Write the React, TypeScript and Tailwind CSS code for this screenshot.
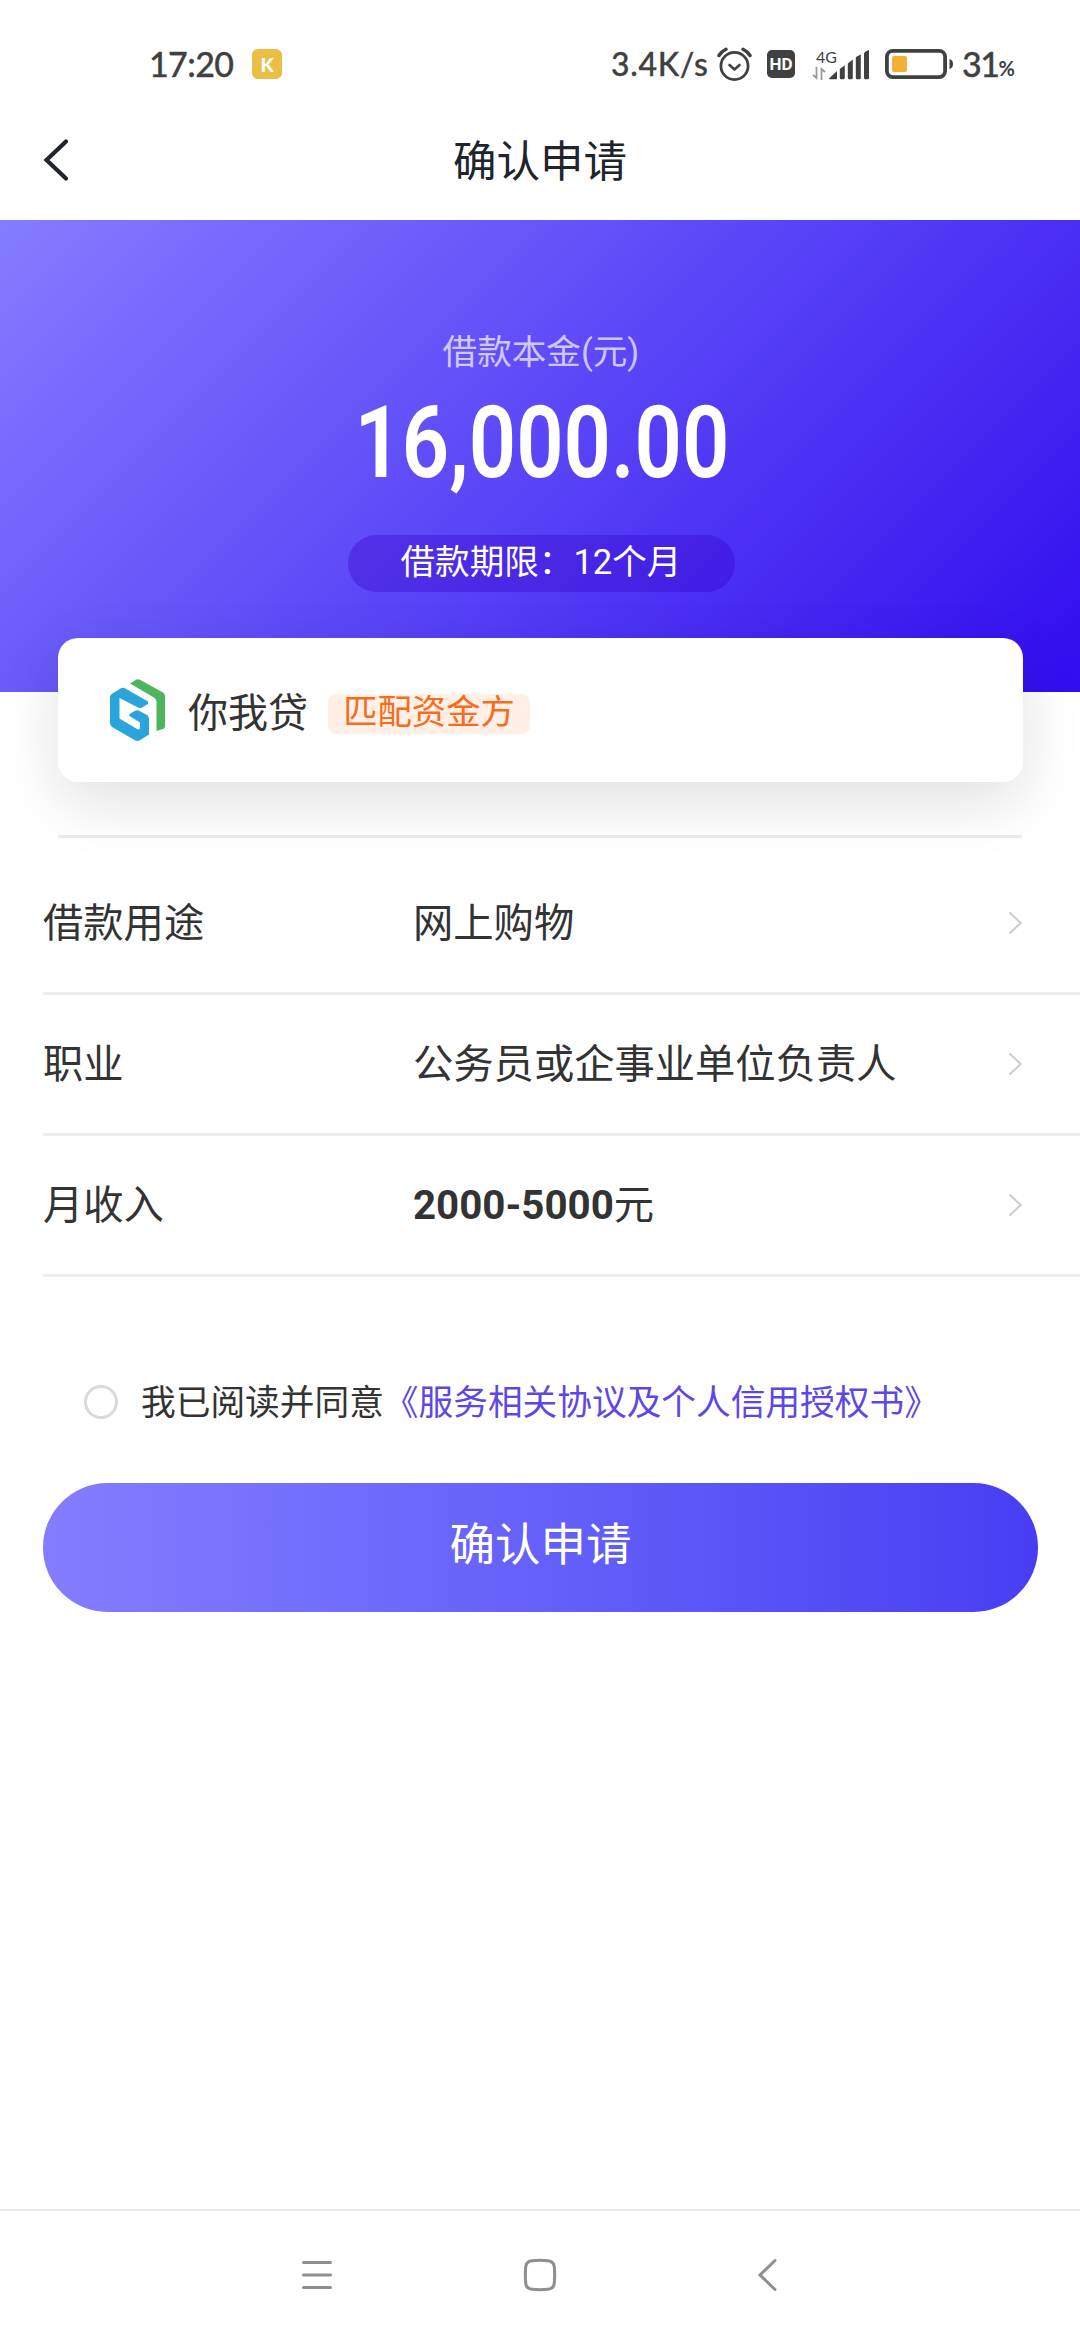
import React from "react";

type Field = {
  id: number;
  label: string;
  amount?: string;
  value: string;
};

const fields: Field[] = [
  { id: 1, label: "借款用途", value: "网上购物" },
  { id: 2, label: "职业", value: "公务员或企事业单位负责人" },
  { id: 3, label: "月收入", amount: "2000-5000", value: "元" },
];

const AlarmIcon = () => (
  <svg width="36" height="36" viewBox="0 0 36 36" fill="none" stroke="#404040" strokeLinecap="round">
    <circle cx="17.5" cy="20" r="13.6" strokeWidth="2.8" />
    <path d="M12.500 19l5 4.500 5-4.500" strokeWidth="2.6" strokeLinejoin="round" />
    <path d="M2 9.500Q4.500 5.500 9 3.300M33 9.500Q30.500 5.500 26 3.300" strokeWidth="3.400" />
  </svg>
);

const SignalIcon = () => (
  <svg width="40" height="30" viewBox="0 0 40 30" fill="#404040">
    <path d="M0 28.500L8 21v7.500a.8.8 0 0 1-.8.8H.8a.8.8 0 0 1-.8-.8z" />
    <path d="M10.800 19l5-3.800v12.800a1.200 1.200 0 0 1-1.200 1.200h-2.600a1.200 1.200 0 0 1-1.200-1.200z" />
    <path d="M18.800 13.500l5-4v18.500a1.200 1.200 0 0 1-1.200 1.200h-2.600a1.200 1.200 0 0 1-1.200-1.200z" />
    <path d="M26.800 8q0-1 1-1.600l4-1.900v23.500a1.200 1.200 0 0 1-1.200 1.200h-2.600a1.200 1.200 0 0 1-1.200-1.200z" />
    <path d="M35 3.500q0-1 1-1.600l4-2.200v28.300a1.200 1.200 0 0 1-1.200 1.200h-2.600a1.200 1.200 0 0 1-1.200-1.200z" />
  </svg>
);

const BatteryIcon = () => (
  <svg width="69" height="30" viewBox="0 0 69 30">
    <rect x="1.900" y="1.900" width="58.200" height="26.200" rx="6" fill="none" stroke="#404040" strokeWidth="3.800" />
    <rect x="7" y="7" width="15" height="16" rx="2" fill="#f6ae36" />
    <path d="M64.500 10v10q3.500-1 3.500-5t-3.500-5z" fill="#404040" />
  </svg>
);

const StatusBar = () => (
  <div className="flex h-[108px] items-center pt-5 text-[#404040]">
    <span className="ml-[149px] w-[103px] font-[Lato] text-[34px] leading-none font-medium tracking-[-0.6px] [-webkit-text-stroke:0.3px_#404040]">
      17:20
    </span>
    <span className="flex size-[30px] items-center justify-center rounded-md bg-[#e9bf45] font-[Lato] text-[19px] leading-none font-black text-white">
      K
    </span>
    <span className="ml-[329px] w-[106px] font-[Lato] text-[32px] leading-none font-medium tracking-[0.7px] [-webkit-text-stroke:0.3px_#404040]">
      3.4K/s
    </span>
    <AlarmIcon />
    <span className="ml-[14px] flex h-7 w-7 items-center justify-center rounded-[5px] bg-[#404040] font-[Roboto] text-[17px] leading-none font-bold text-white">
      HD
    </span>
    <div className="ml-[17px] flex items-end">
      <div className="flex w-[17px] flex-col">
        <span className="ml-1 font-[Lato] text-[16px] leading-[17px]">4G</span>
        <svg className="mt-0.5" width="14" height="13" viewBox="0 0 14 13" fill="none" stroke="#999" strokeWidth="1.800">
          <path d="M4.500 0v11L1 8M9.500 13V2L13 5" />
        </svg>
      </div>
      <SignalIcon />
    </div>
    <span className="ml-4">
      <BatteryIcon />
    </span>
    <span className="ml-2 font-[Lato] text-[34px] leading-none font-medium tracking-[-1.500px] [-webkit-text-stroke:0.3px_#404040]">
      31
    </span>
    <span className="mt-2 font-[Lato] text-[20px] leading-none font-bold">%</span>
  </div>
);

const Header = () => (
  <header className="grid h-28 grid-cols-[1fr_auto_1fr] items-center pb-2">
    <button className="ml-[42px] w-7" aria-label="返回">
      <svg width="28" height="44" viewBox="0 0 28 44" fill="none" stroke="#20242c" strokeWidth="4.200" strokeLinecap="round">
        <path d="M24 3.500L4.500 22l19.500 18.500" />
      </svg>
    </button>
    <h1 className="mt-1.5 text-[43.500px] leading-none text-[#20242c]">确认申请</h1>
  </header>
);

const Hero = () => (
  <section className="flex h-[472px] flex-col items-center bg-[linear-gradient(135deg,#857dff_0%,#5a45f7_50%,#310cee_100%)] pt-[113px] text-white">
    <p className="ml-0.5 text-[34.600px] leading-[38px] text-white/70">借款本金(元)</p>
    <p className="mt-[22px] ml-1 scale-x-[0.83] text-[100px] leading-[100px] font-semibold">16,000.00</p>
    <p className="mt-[42px] ml-0.5 flex h-[57px] w-[387px] items-center justify-center rounded-full bg-[#3200c8]/35 pb-0.5 text-[34.600px] leading-none">
      借款期限：12个月
    </p>
  </section>
);

const LenderLogo = () => (
  <svg width="56" height="63" viewBox="0 0 56 63" fill="none">
    <path
      d="M20 4.500L26 .8Q28 -.3 30 .8L53 13.500Q55 14.800 55 17V47Q55 49 53 50L46.500 52V23Q46.500 20 44 18.500L20 4.500Z"
      fill="#4eb45e"
    />
    <path
      d="M14.500 9L38 22.500V25L31.500 28.800Q29.500 29.300 27.500 28.300L9.500 19V39.500L27 50Q30 51.500 30 48.500V43.500L19.500 37V35L25.500 31.500Q27.500 30.800 29.500 32L37 36Q39 37.300 39 40V55.500L29.500 61.500Q27.500 62.500 25 61.300L2 48Q0 46.500 0 44V18Q0 16 2 14.800L10.500 9.500Q12.500 8.300 14.500 9Z"
      fill="#29a5dc"
    />
  </svg>
);

const LenderCard = () => (
  <div className="relative mr-[57px] ml-[58px] -mt-[54px] flex h-36 items-center rounded-[20px] bg-white pl-[52px] shadow-[0_20px_60px_rgba(0,0,0,0.12)]">
    <LenderLogo />
    <span className="mt-2 ml-[22px] text-[40px] leading-none text-[#333]">你我贷</span>
    <span className="mt-[7px] ml-5 flex h-10 w-[202px] items-center justify-center rounded-lg bg-[#ffefe5] pb-0.5 text-[34.300px] leading-none text-[#f66b1c]">
      匹配资金方
    </span>
  </div>
);

const FieldRow = ({ field }: { field: Field }) => (
  <div className="ml-[43px] flex h-[141px] items-center border-b-3 border-[#ededed] pr-[58px] text-[40.300px] leading-none text-[#333]">
    <span className="w-[370px] pt-0.5">{field.label}</span>
    <span className="flex-1 pt-0.5">
      {field.amount && <b className="font-bold">{field.amount}</b>}
      {field.value}
    </span>
    <svg width="14" height="24" viewBox="0 0 14 24" fill="none" stroke="#ccc" strokeWidth="2">
      <path d="M1.500 1.500L12.800 12 1.500 22.500" />
    </svg>
  </div>
);

const NavBar = () => (
  <nav className="mt-auto flex h-[131px] items-center border-t-2 border-[#e8e8e8] pb-0.5 pl-[300px]">
    <svg width="34" height="34" viewBox="0 0 34 34" stroke="#8f8f8f" strokeWidth="3" strokeLinecap="round">
      <path d="M3.500 4.500h27M3.500 17h27M3.500 29.500h27" />
    </svg>
    <svg className="ml-[189px]" width="34" height="34" viewBox="0 0 34 34" fill="none" stroke="#8f8f8f" strokeWidth="3">
      <path d="M9 2.700Q17 2 25 2.700 30.800 3.200 31.300 9 32 17 31.300 25 30.800 30.800 25 31.300 17 32 9 31.300 3.200 30.800 2.700 25 2 17 2.700 9 3.200 3.200 9 2.700z" />
    </svg>
    <svg className="ml-[200px]" width="22" height="34" viewBox="0 0 22 34" fill="none" stroke="#8f8f8f" strokeWidth="3" strokeLinecap="round">
      <path d="M18 2.500L3 17l15 14.500" />
    </svg>
  </nav>
);

const App = () => {
  return (
    <div className="flex h-[2340px] w-[1080px] flex-col overflow-hidden bg-white font-[Roboto,'Noto_Sans_CJK_SC',sans-serif]">
      <StatusBar />
      <Header />
      <Hero />
      <LenderCard />
      <hr className="mx-[58px] mt-[53px] mb-4 border-t-3 border-[#ebebeb]" />
      {fields.map((field) => (
        <FieldRow key={field.id} field={field} />
      ))}
      <label className="mt-[105px] ml-[84px] flex h-10 items-center text-[34.700px] leading-none text-[#333]">
        <span className="size-[34px] rounded-full border-3 border-[#dadada]" />
        <span className="ml-[23px] pt-0.5">
          我已阅读并同意<span className="text-[#5d48e5]">《服务相关协议及个人信用授权书》</span>
        </span>
      </label>
      <button className="mt-[61px] mr-[42px] ml-[43px] h-[129px] rounded-full bg-linear-to-r from-[#857dff] to-[#483df3] pb-1 text-[45.500px] leading-none text-white">
        确认申请
      </button>
      <NavBar />
    </div>
  );
};

export default App;
